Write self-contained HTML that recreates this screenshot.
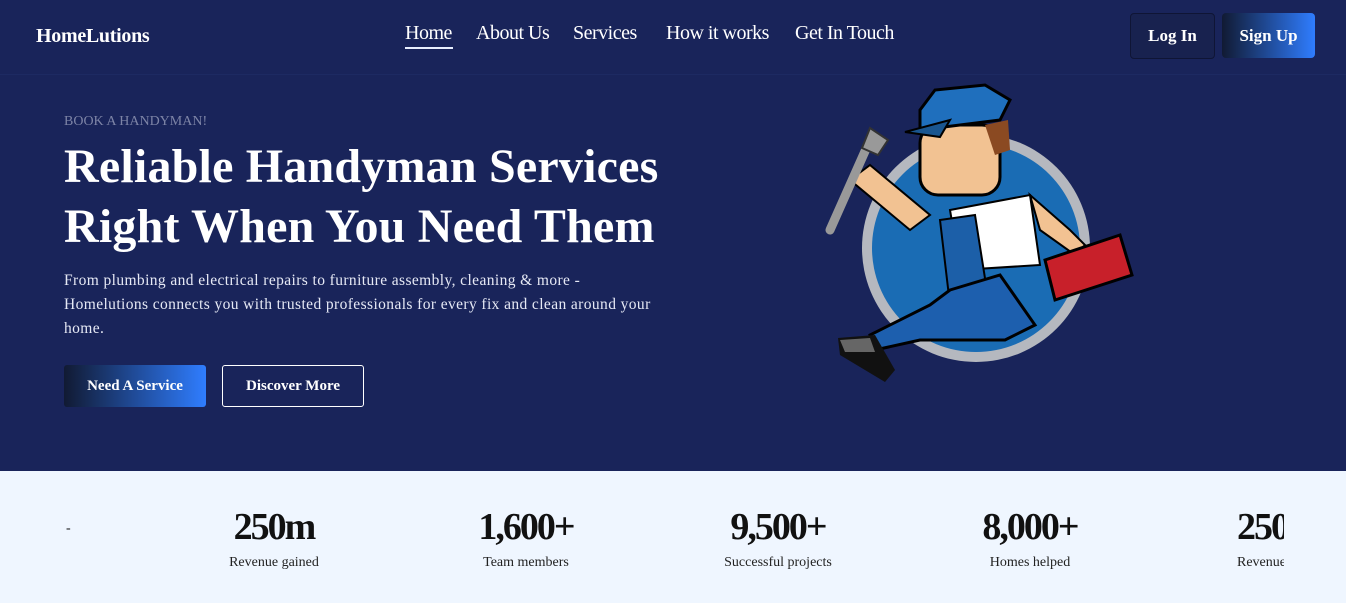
<!DOCTYPE html>
<html><head><meta charset="utf-8"><style>
*{margin:0;padding:0;box-sizing:border-box}
body{width:1346px;height:603px;overflow:hidden;background:#19245a;font-family:"Liberation Serif",serif;color:#fff;position:relative}
.hdr{position:absolute;left:0;top:0;width:1346px;height:75px;border-bottom:1px solid #1d2a62}
.logo{position:absolute;left:36px;top:25px;font-size:20px;font-weight:bold;letter-spacing:-0.3px}
.nav a{position:absolute;top:22px;font-size:20px;color:#fff;text-decoration:none;letter-spacing:-0.5px}
.btn{position:absolute;font-weight:bold;display:flex;align-items:center;justify-content:center;color:#fff}
.stats{position:absolute;left:0;top:471px;width:1346px;height:132px;background:#eff6ff;color:#111}
.st{position:absolute;text-align:center;width:200px}
.st b{display:block;font-size:38px;font-weight:bold;letter-spacing:-2px;line-height:40px}
.st span{display:block;font-size:14px;margin-top:8px;color:#222}
</style></head><body>
<div class="hdr">
<div class="logo">HomeLutions</div>
<div class="nav">
<a style="left:405px">Home</a><div style="position:absolute;left:405px;top:47px;width:48px;height:2px;background:#e8efff"></div>
<a style="left:476px">About Us</a>
<a style="left:573px">Services</a>
<a style="left:666px">How it works</a>
<a style="left:795px">Get In Touch</a>
</div>
<div class="btn" style="left:1130px;top:13px;width:85px;height:46px;border:1px solid #0f1535;border-radius:4px;background:#18224f;font-size:17px">Log In</div>
<div class="btn" style="left:1222px;top:13px;width:93px;height:45px;border-radius:4px;background:linear-gradient(90deg,#111a33,#2f7dff);font-size:17px">Sign Up</div>
</div>
<div style="position:absolute;left:64px;top:114px;font-size:14px;color:#7d84a6">BOOK A HANDYMAN!</div>
<div style="position:absolute;left:64px;top:137px;font-size:48px;font-weight:bold;line-height:60px;letter-spacing:0.2px">Reliable Handyman Services<br>Right When You Need Them</div>
<div style="position:absolute;left:64px;top:269px;font-size:15.5px;line-height:24px;color:#e6e9f5;letter-spacing:0.4px;width:600px">From plumbing and electrical repairs to furniture assembly, cleaning &amp; more - Homelutions connects you with trusted professionals for every fix and clean around your home.</div>
<div class="btn" style="left:64px;top:365px;width:142px;height:42px;border-radius:3px;background:linear-gradient(90deg,#111a33,#2f7dff);font-size:15px">Need A Service</div>
<div class="btn" style="left:222px;top:365px;width:142px;height:42px;border-radius:3px;border:1px solid #fff;font-size:15px">Discover More</div>
<svg style="position:absolute;left:800px;top:70px" width="350" height="330" viewBox="0 0 350 330">
<circle cx="176" cy="178" r="114" fill="#b5b8bf"/>
<circle cx="176" cy="178" r="104" fill="#1a6cb4"/>
<path d="M150 140 L230 125 L240 195 L160 200Z" fill="#fff" stroke="#000" stroke-width="2"/>
<path d="M140 150 L175 145 L190 240 L150 235Z" fill="#1c5fa8" stroke="#000" stroke-width="2"/>
<path d="M150 220 L200 205 L235 255 L205 270 L120 270 L75 280 L70 265 L130 235Z" fill="#1d5fae" stroke="#000" stroke-width="3"/>
<path d="M38 268 L75 265 L95 300 L85 312 L40 285Z" fill="#111"/>
<path d="M40 270 L70 268 L75 282 L45 282Z" fill="#666"/>
<path d="M50 110 L70 95 L130 145 L110 160Z" fill="#f2c292" stroke="#000" stroke-width="2"/>
<path d="M30 160 L70 70" stroke="#999" stroke-width="9" stroke-linecap="round"/>
<path d="M62 78 L70 58 L88 70 L78 85Z" fill="#999" stroke="#333" stroke-width="2"/>
<path d="M230 125 L270 160 L285 175 L275 185 L240 160Z" fill="#f2c292" stroke="#000" stroke-width="2"/>
<path d="M245 190 L320 165 L332 205 L255 230Z" fill="#c8202a" stroke="#000" stroke-width="3"/>
<rect x="120" y="55" width="80" height="70" rx="18" fill="#f2c292" stroke="#000" stroke-width="3"/>
<path d="M120 60 L200 50 L210 30 L185 15 L135 20 L120 40Z" fill="#1f6fbd" stroke="#000" stroke-width="3"/>
<path d="M105 62 L150 50 L140 67Z" fill="#1a5690" stroke="#000" stroke-width="2"/>
<path d="M185 55 L208 50 L210 80 L195 85Z" fill="#8b4a22"/>
</svg>
<div class="stats">
<div style="position:absolute;left:66px;top:50px;font-size:14px">-</div>
<div class="st" style="left:174px;top:36px"><b>250m</b><span>Revenue gained</span></div>
<div class="st" style="left:426px;top:36px"><b>1,600+</b><span>Team members</span></div>
<div class="st" style="left:678px;top:36px"><b>9,500+</b><span>Successful projects</span></div>
<div class="st" style="left:930px;top:36px"><b>8,000+</b><span>Homes helped</span></div>
<div style="position:absolute;left:1237px;top:36px;width:47px;overflow:hidden;white-space:nowrap"><b style="display:block;font-size:38px;letter-spacing:-2px;line-height:40px">250m</b><span style="display:block;font-size:14px;margin-top:8px;color:#222">Revenue gained</span></div>
</div>
</body></html>
